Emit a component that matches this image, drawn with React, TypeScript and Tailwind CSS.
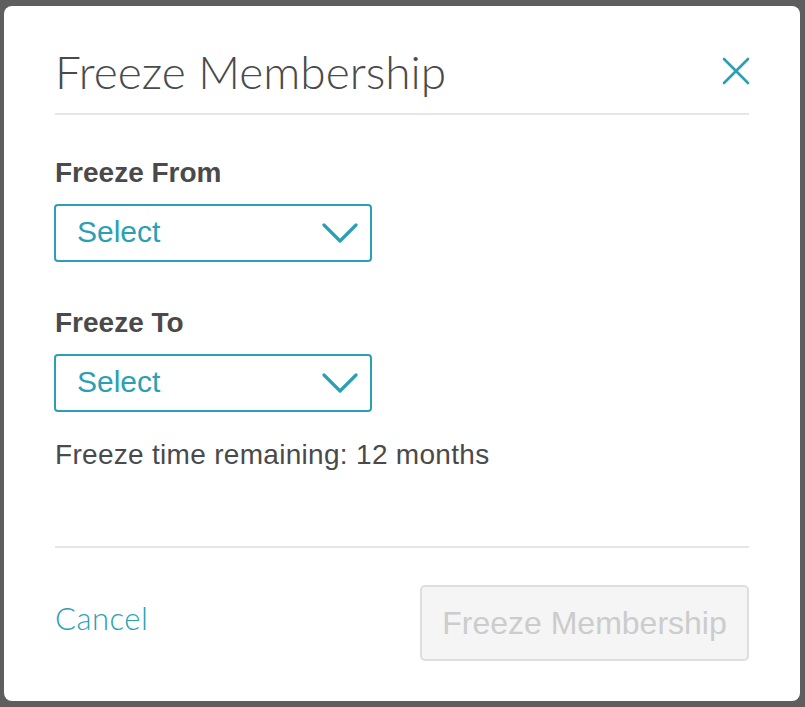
import { useState } from 'react';

const teal = 'text-[#2b9fb4]';

function SelectBox({ label }: { label: string }) {
  return (
    <div className="flex flex-col">
      <label className="text-[28px] font-bold leading-none text-[#4a4a4a] mb-[17px]">{label}</label>
      <button className="ml-[-1px] w-[318px] h-[58px] flex items-center justify-between pl-[21px] pr-[12px] rounded-[4px] border-2 border-[#2b9fb4] bg-white">
        <span className={`text-[30px] leading-none pb-[3px] ${teal}`}>Select</span>
        <svg width="36" height="22" viewBox="0 0 36 22" fill="none">
          <path d="M2 3 L18 19 L34 3" stroke="#2b9fb4" strokeWidth="3.2" strokeLinecap="round" strokeLinejoin="round" />
        </svg>
      </button>
    </div>
  );
}

export default function App() {
  const [open] = useState(true);

  return (
    <div className="w-[805px] h-[707px] bg-[#5e5e5e] flex items-start pl-[4px] pt-[6px]" style={{ fontFamily: '"Liberation Sans", Arial, sans-serif' }}>
      {open && (
        <div className="w-[796px] h-[695px] bg-white rounded-[8px] flex flex-col px-[51px]">
          {/* HEADER */}
          <div className="flex items-center justify-between pt-[43px] pb-[18px] border-b-2 border-[#e6e6e6]" style={{ fontFamily: 'Lato, "Open Sans", sans-serif' }}>
            <h2 className="text-[46px] font-light leading-none text-[#4a4a4a]">Freeze Membership</h2>
            <button className="mr-[-1px] mt-[-2px]">
              <svg width="28" height="28" viewBox="0 0 28 28" fill="none">
                <path d="M2 2 L26 26 M26 2 L2 26" stroke="#2b9fb4" strokeWidth="2.6" strokeLinecap="round" />
              </svg>
            </button>
          </div>

          {/* BODY */}
          <div className="flex flex-col pt-[44px] pb-[77px] border-b-2 border-[#e6e6e6]">
            <SelectBox label="Freeze From" />
            <div className="h-[47px]" />
            <SelectBox label="Freeze To" />
            <p className="mt-[29px] text-[28px] tracking-[0.3px] leading-none text-[#4a4a4a]">Freeze time remaining: 12 months</p>
          </div>

          {/* FOOTER */}
          <div className="flex items-center justify-between pt-[37px]">
            <button className={`mb-[10px] text-[31px] leading-none tracking-[0.5px] font-light ${teal}`} style={{ fontFamily: 'Lato, "Open Sans", sans-serif' }}>Cancel</button>
            <button disabled className="w-[329px] h-[76px] rounded-[5px] border-2 border-[#dedede] bg-[#f5f5f5] text-[32px] text-[#cccccc]">
              Freeze Membership
            </button>
          </div>
        </div>
      )}
    </div>
  );
}
